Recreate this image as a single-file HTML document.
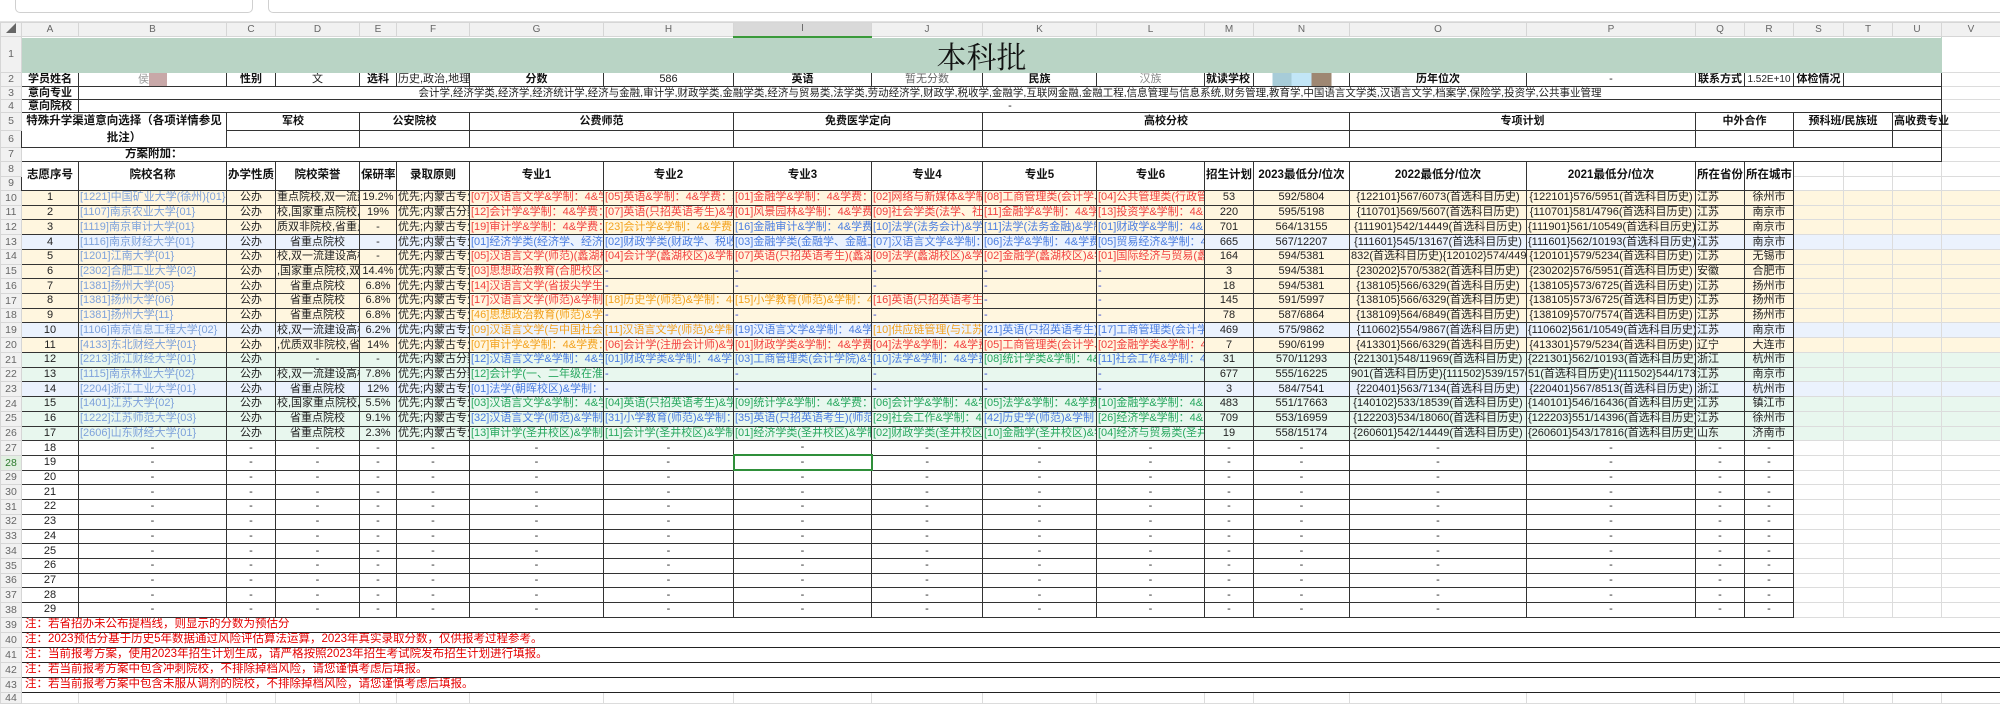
<!DOCTYPE html>
<html><head><meta charset="utf-8"><style>
*{margin:0;padding:0;box-sizing:border-box}
body{width:2000px;height:699px;overflow:hidden;background:#fff;font-family:"Liberation Sans","Noto Sans CJK SC",sans-serif;position:relative}
.top{position:absolute;left:0;top:0;width:2000px;height:22px;background:#fff;border-bottom:1px solid #e2e2e2}
.top .b1{position:absolute;left:15px;top:-6px;width:238px;height:19px;border:1px solid #d0d0d0;border-radius:5px}
.top .b2{position:absolute;left:268px;top:-6px;width:1740px;height:19px;border:1px solid #d0d0d0;border-radius:5px}
table{position:absolute;left:0;top:22px;border-collapse:collapse;table-layout:fixed;width:2000px}
td{overflow:hidden;white-space:nowrap;font-size:11px;line-height:1;text-align:center;border:1px solid #dcdcdc;padding:0 1px;color:#222}
td.rh{background:#f1f1f1;color:#666;font-size:10.5px;border-color:#d6d6d6}
tr.ch td{background:#f1f1f1;color:#666;font-size:10px;border-color:#d6d6d6}
tr.ch td.sel{background:#d9d9d9;border-bottom:2px solid #3a9a3a}
.t{background:#b9d4c5;font-family:"Noto Serif CJK SC",serif;font-size:30px;color:#111;border-color:#b9d4c5}
.bd{font-weight:bold;color:#111}
.k td.c{border:1px solid #333}
.l{text-align:left}
.y td.d{background:#fff6df}.b td.d{background:#ebf2fd}.g td.d{background:#e8f7ee}
td.d{border-color:#333}
td.e{border-color:#dcdcdc}
.y td.e{background:#fff6df}.b td.e{background:#ebf2fd}.g td.e{background:#e8f7ee}
.s{color:#7ea2db}
.r{color:#f2413f}.o{color:#f3a21e}.u{color:#4b7de0}.n{color:#27a85f}.m{color:#3246d0}
td.nt{color:#e60000;text-align:left;font-size:11.5px;border:none;border-bottom:1px solid #222;padding-left:3px}
</style></head><body>
<div class="top"><div class="b1"></div><div class="b2"></div></div>
<table>
<colgroup><col style="width:21px"><col style="width:57px"><col style="width:148px"><col style="width:49px"><col style="width:84px"><col style="width:37px"><col style="width:73px"><col style="width:134px"><col style="width:130px"><col style="width:138px"><col style="width:111px"><col style="width:114px"><col style="width:108px"><col style="width:49px"><col style="width:96px"><col style="width:177px"><col style="width:169px"><col style="width:49px"><col style="width:49px"><col style="width:50px"><col style="width:49px"><col style="width:49px"><col style="width:59px"></colgroup>
<tr class="ch" style="height:14px"><td>◢</td><td>A</td><td>B</td><td>C</td><td>D</td><td>E</td><td>F</td><td>G</td><td>H</td><td class="sel">I</td><td>J</td><td>K</td><td>L</td><td>M</td><td>N</td><td>O</td><td>P</td><td>Q</td><td>R</td><td>S</td><td>T</td><td>U</td><td>V</td></tr>
<tr style="height:36px"><td class="rh">1</td><td colspan="21" class="t">本科批</td><td class="e"></td></tr>
<tr class="k" style="height:14px"><td class="rh">2</td><td class="c bd">学员姓名</td><td class="c" style="color:#999">侯<span style="display:inline-block;width:18px;height:13px;background:#c8a8a8;vertical-align:middle"></span></td><td class="c bd">性别</td><td class="c">文</td><td class="c bd">选科</td><td class="c l">历史,政治,地理</td><td class="c bd">分数</td><td class="c">586</td><td class="c bd">英语</td><td class="c" style="color:#666">暂无分数</td><td class="c bd">民族</td><td class="c" style="color:#888">汉族</td><td class="c bd l" style="overflow:visible">就读学校</td><td class="c" style="background:linear-gradient(90deg,#fff 0 18px,#a7ccd8 18px 37px,#c2e6f7 37px 57px,#9e8772 57px 77px,#fff 77px)"></td><td class="c bd">历年位次</td><td class="c">-</td><td class="c bd">联系方式</td><td class="c" style="font-size:10px">1.52E+10</td><td class="c bd">体检情况</td><td class="c" colspan="2"></td><td class="e"></td></tr>
<tr class="k" style="height:13px"><td class="rh">3</td><td class="c bd">意向专业</td><td class="c" colspan="20" style="font-size:10.5px">会计学,经济学类,经济学,经济统计学,经济与金融,审计学,财政学类,金融学类,经济与贸易类,法学类,劳动经济学,财政学,税收学,金融学,互联网金融,金融工程,信息管理与信息系统,财务管理,教育学,中国语言文学类,汉语言文学,档案学,保险学,投资学,公共事业管理</td><td class="e"></td></tr>
<tr class="k" style="height:13px"><td class="rh">4</td><td class="c bd">意向院校</td><td class="c" colspan="20">-</td><td class="e"></td></tr>
<tr class="k" style="height:18px"><td class="rh">5</td><td class="c bd" colspan="2" rowspan="2" style="white-space:normal;line-height:17px;font-size:11.5px">特殊升学渠道意向选择（各项详情参见批注）</td><td class="c bd" colspan="2">军校</td><td class="c bd" colspan="2">公安院校</td><td class="c bd" colspan="2">公费师范</td><td class="c bd" colspan="2">免费医学定向</td><td class="c bd" colspan="4">高校分校</td><td class="c bd" colspan="2">专项计划</td><td class="c bd" colspan="2">中外合作</td><td class="c bd" colspan="2">预科班/民族班</td><td class="c bd" style="overflow:visible">高收费专业</td><td class="e"></td></tr>
<tr class="k" style="height:17px"><td class="rh">6</td><td class="c" colspan="2"></td><td class="c" colspan="2"></td><td class="c" colspan="2"></td><td class="c" colspan="2"></td><td class="c" colspan="4"></td><td class="c" colspan="2"></td><td class="c" colspan="2"></td><td class="c" colspan="2"></td><td class="c"></td><td class="e"></td></tr>
<tr class="k" style="height:14px"><td class="rh">7</td><td class="c bd" colspan="2" style="border-right:none;padding-left:60px;font-size:11.5px">方案附加：</td><td class="c" colspan="19" style="border-left:none"></td><td class="e"></td></tr>
<tr class="k" style="height:14.5px"><td class="rh">8</td><td class="c bd" rowspan="2" style="font-size:11.5px">志愿序号</td><td class="c bd" rowspan="2" style="font-size:11.5px">院校名称</td><td class="c bd" rowspan="2" style="font-size:11.5px">办学性质</td><td class="c bd" rowspan="2" style="font-size:11.5px">院校荣誉</td><td class="c bd" rowspan="2" style="font-size:11.5px">保研率</td><td class="c bd" rowspan="2" style="font-size:11.5px">录取原则</td><td class="c bd" rowspan="2" style="font-size:11.5px">专业1</td><td class="c bd" rowspan="2" style="font-size:11.5px">专业2</td><td class="c bd" rowspan="2" style="font-size:11.5px">专业3</td><td class="c bd" rowspan="2" style="font-size:11.5px">专业4</td><td class="c bd" rowspan="2" style="font-size:11.5px">专业5</td><td class="c bd" rowspan="2" style="font-size:11.5px">专业6</td><td class="c bd" rowspan="2" style="font-size:11.5px">招生计划</td><td class="c bd" rowspan="2" style="font-size:11.5px">2023最低分/位次</td><td class="c bd" rowspan="2" style="font-size:11.5px">2022最低分/位次</td><td class="c bd" rowspan="2" style="font-size:11.5px">2021最低分/位次</td><td class="c bd" rowspan="2" style="font-size:11.5px">所在省份</td><td class="c bd" rowspan="2" style="font-size:11.5px">所在城市</td><td class="e"></td><td class="e"></td><td class="e"></td><td class="e"></td></tr>
<tr style="height:14.5px"><td class="rh">9</td><td class="e"></td><td class="e"></td><td class="e"></td><td class="e"></td></tr>

<tr class="y" style="height:14.72px"><td class="rh">10</td><td class="d">1</td><td class="d l s">[1221]中国矿业大学(徐州){01}</td><td class="d">公办</td><td class="d">重点院校,双一流建</td><td class="d">19.2%</td><td class="d l">优先;内蒙古专业</td><td class="d l r">[07]汉语言文学&amp;学制：4&amp;学费</td><td class="d l r">[05]英语&amp;学制：4&amp;学费：5</td><td class="d l r">[01]金融学&amp;学制：4&amp;学费：</td><td class="d l r">[02]网络与新媒体&amp;学制</td><td class="d l r">[08]工商管理类(会计学、</td><td class="d l r">[04]公共管理类(行政管</td><td class="d">53</td><td class="d">592/5804</td><td class="d">{122101}567/6073(首选科目历史)</td><td class="d">{122101}576/5951(首选科目历史)</td><td class="d l">江苏</td><td class="d">徐州市</td><td class="e"></td><td class="e"></td><td class="e"></td><td class="e"></td></tr>
<tr class="y" style="height:14.72px"><td class="rh">11</td><td class="d">2</td><td class="d l s">[1107]南京农业大学{01}</td><td class="d">公办</td><td class="d">校,国家重点院校,双</td><td class="d">19%</td><td class="d l">优先;内蒙古分数</td><td class="d l r">[12]会计学&amp;学制：4&amp;学费：</td><td class="d l r">[07]英语(只招英语考生)&amp;学</td><td class="d l r">[01]风景园林&amp;学制：4&amp;学费</td><td class="d l r">[09]社会学类(法学、社</td><td class="d l r">[11]金融学&amp;学制：4&amp;学</td><td class="d l r">[13]投资学&amp;学制：4&amp;</td><td class="d">220</td><td class="d">595/5198</td><td class="d">{110701}569/5607(首选科目历史)</td><td class="d">{110701}581/4796(首选科目历史)</td><td class="d l">江苏</td><td class="d">南京市</td><td class="e"></td><td class="e"></td><td class="e"></td><td class="e"></td></tr>
<tr class="y" style="height:14.72px"><td class="rh">12</td><td class="d">3</td><td class="d l s">[1119]南京审计大学{01}</td><td class="d">公办</td><td class="d">质双非院校,省重点</td><td class="d">-</td><td class="d l">优先;内蒙古专业</td><td class="d l r">[19]审计学&amp;学制：4&amp;学费：</td><td class="d l o">[23]会计学&amp;学制：4&amp;学费：</td><td class="d l u">[16]金融审计&amp;学制：4&amp;学费</td><td class="d l u">[10]法学(法务会计)&amp;学</td><td class="d l u">[11]法学(法务金融)&amp;学制</td><td class="d l u">[01]财政学&amp;学制：4&amp;</td><td class="d">701</td><td class="d">564/13155</td><td class="d">{111901}542/14449(首选科目历史)</td><td class="d">{111901}561/10549(首选科目历史)</td><td class="d l">江苏</td><td class="d">南京市</td><td class="e"></td><td class="e"></td><td class="e"></td><td class="e"></td></tr>
<tr class="b" style="height:14.72px"><td class="rh">13</td><td class="d">4</td><td class="d l s">[1116]南京财经大学{01}</td><td class="d">公办</td><td class="d">省重点院校</td><td class="d">-</td><td class="d l">优先;内蒙古专业</td><td class="d l u">[01]经济学类(经济学、经济</td><td class="d l u">[02]财政学类(财政学、税收</td><td class="d l u">[03]金融学类(金融学、金融工</td><td class="d l u">[07]汉语言文学&amp;学制：</td><td class="d l u">[06]法学&amp;学制：4&amp;学费</td><td class="d l u">[05]贸易经济&amp;学制：4</td><td class="d">665</td><td class="d">567/12207</td><td class="d">{111601}545/13167(首选科目历史)</td><td class="d">{111601}562/10193(首选科目历史)</td><td class="d l">江苏</td><td class="d">南京市</td><td class="e"></td><td class="e"></td><td class="e"></td><td class="e"></td></tr>
<tr class="y" style="height:14.72px"><td class="rh">14</td><td class="d">5</td><td class="d l s">[1201]江南大学{01}</td><td class="d">公办</td><td class="d">校,双一流建设高校</td><td class="d">-</td><td class="d l">优先;内蒙古专业</td><td class="d l r">[05]汉语言文学(师范)(蠡湖校</td><td class="d l r">[04]会计学(蠡湖校区)&amp;学制</td><td class="d l r">[07]英语(只招英语考生)(蠡湖</td><td class="d l r">[09]法学(蠡湖校区)&amp;学</td><td class="d l r">[02]金融学(蠡湖校区)&amp;学</td><td class="d l r">[01]国际经济与贸易(蠡</td><td class="d">164</td><td class="d">594/5381</td><td class="d" style="text-align:right">832(首选科目历史){120102}574/4499</td><td class="d">{120101}579/5234(首选科目历史)</td><td class="d l">江苏</td><td class="d">无锡市</td><td class="e"></td><td class="e"></td><td class="e"></td><td class="e"></td></tr>
<tr class="y" style="height:14.72px"><td class="rh">15</td><td class="d">6</td><td class="d l s">[2302]合肥工业大学{02}</td><td class="d">公办</td><td class="d">,国家重点院校,双</td><td class="d">14.4%</td><td class="d l">优先;内蒙古专业</td><td class="d l r">[03]思想政治教育(合肥校区)</td><td class="d l m">-</td><td class="d l m">-</td><td class="d l m">-</td><td class="d l m">-</td><td class="d l m">-</td><td class="d">3</td><td class="d">594/5381</td><td class="d">{230202}570/5382(首选科目历史)</td><td class="d">{230202}576/5951(首选科目历史)</td><td class="d l">安徽</td><td class="d">合肥市</td><td class="e"></td><td class="e"></td><td class="e"></td><td class="e"></td></tr>
<tr class="y" style="height:14.72px"><td class="rh">16</td><td class="d">7</td><td class="d l s">[1381]扬州大学{05}</td><td class="d">公办</td><td class="d">省重点院校</td><td class="d">6.8%</td><td class="d l">优先;内蒙古专业</td><td class="d l r">[14]汉语言文学(省拔尖学生)</td><td class="d l m">-</td><td class="d l m">-</td><td class="d l m">-</td><td class="d l m">-</td><td class="d l m">-</td><td class="d">18</td><td class="d">594/5381</td><td class="d">{138105}566/6329(首选科目历史)</td><td class="d">{138105}573/6725(首选科目历史)</td><td class="d l">江苏</td><td class="d">扬州市</td><td class="e"></td><td class="e"></td><td class="e"></td><td class="e"></td></tr>
<tr class="y" style="height:14.72px"><td class="rh">17</td><td class="d">8</td><td class="d l s">[1381]扬州大学{06}</td><td class="d">公办</td><td class="d">省重点院校</td><td class="d">6.8%</td><td class="d l">优先;内蒙古专业</td><td class="d l r">[17]汉语言文学(师范)&amp;学制：</td><td class="d l o">[18]历史学(师范)&amp;学制：48</td><td class="d l o">[15]小学教育(师范)&amp;学制：4</td><td class="d l r">[16]英语(只招英语考生</td><td class="d l m">-</td><td class="d l m">-</td><td class="d">145</td><td class="d">591/5997</td><td class="d">{138105}566/6329(首选科目历史)</td><td class="d">{138105}573/6725(首选科目历史)</td><td class="d l">江苏</td><td class="d">扬州市</td><td class="e"></td><td class="e"></td><td class="e"></td><td class="e"></td></tr>
<tr class="y" style="height:14.72px"><td class="rh">18</td><td class="d">9</td><td class="d l s">[1381]扬州大学{11}</td><td class="d">公办</td><td class="d">省重点院校</td><td class="d">6.8%</td><td class="d l">优先;内蒙古专业</td><td class="d l o">[46]思想政治教育(师范)&amp;学</td><td class="d l m">-</td><td class="d l m">-</td><td class="d l m">-</td><td class="d l m">-</td><td class="d l m">-</td><td class="d">78</td><td class="d">587/6864</td><td class="d">{138109}564/6849(首选科目历史)</td><td class="d">{138109}570/7574(首选科目历史)</td><td class="d l">江苏</td><td class="d">扬州市</td><td class="e"></td><td class="e"></td><td class="e"></td><td class="e"></td></tr>
<tr class="b" style="height:14.72px"><td class="rh">19</td><td class="d">10</td><td class="d l s">[1106]南京信息工程大学{02}</td><td class="d">公办</td><td class="d">校,双一流建设高校</td><td class="d">6.2%</td><td class="d l">优先;内蒙古专业</td><td class="d l o">[09]汉语言文学(与中国社会</td><td class="d l o">[11]汉语言文学(师范)&amp;学制</td><td class="d l u">[19]汉语言文学&amp;学制：4&amp;学</td><td class="d l o">[10]供应链管理(与江苏</td><td class="d l u">[21]英语(只招英语考生)&amp;</td><td class="d l u">[17]工商管理类(会计学</td><td class="d">469</td><td class="d">575/9862</td><td class="d">{110602}554/9867(首选科目历史)</td><td class="d">{110602}561/10549(首选科目历史)</td><td class="d l">江苏</td><td class="d">南京市</td><td class="e"></td><td class="e"></td><td class="e"></td><td class="e"></td></tr>
<tr class="y" style="height:14.72px"><td class="rh">20</td><td class="d">11</td><td class="d l s">[4133]东北财经大学{01}</td><td class="d">公办</td><td class="d">,优质双非院校,省</td><td class="d">14%</td><td class="d l">优先;内蒙古专业</td><td class="d l o">[07]审计学&amp;学制：4&amp;学费：</td><td class="d l r">[06]会计学(注册会计师)&amp;学</td><td class="d l r">[01]财政学类&amp;学制：4&amp;学费</td><td class="d l r">[04]法学&amp;学制：4&amp;学费</td><td class="d l r">[05]工商管理类(会计学、</td><td class="d l r">[02]金融学类&amp;学制：4</td><td class="d">7</td><td class="d">590/6199</td><td class="d">{413301}566/6329(首选科目历史)</td><td class="d">{413301}579/5234(首选科目历史)</td><td class="d l">辽宁</td><td class="d">大连市</td><td class="e"></td><td class="e"></td><td class="e"></td><td class="e"></td></tr>
<tr class="g" style="height:14.72px"><td class="rh">21</td><td class="d">12</td><td class="d l s">[2213]浙江财经大学{01}</td><td class="d">公办</td><td class="d">-</td><td class="d">-</td><td class="d l">优先;内蒙古分数</td><td class="d l u">[12]汉语言文学&amp;学制：4&amp;学</td><td class="d l u">[01]财政学类&amp;学制：4&amp;学费</td><td class="d l u">[03]工商管理类(会计学院)&amp;学</td><td class="d l u">[10]法学&amp;学制：4&amp;学费</td><td class="d l n">[08]统计学类&amp;学制：4&amp;</td><td class="d l u">[11]社会工作&amp;学制：4</td><td class="d">31</td><td class="d">570/11293</td><td class="d">{221301}548/11969(首选科目历史)</td><td class="d">{221301}562/10193(首选科目历史)</td><td class="d l">浙江</td><td class="d">杭州市</td><td class="e"></td><td class="e"></td><td class="e"></td><td class="e"></td></tr>
<tr class="g" style="height:14.72px"><td class="rh">22</td><td class="d">13</td><td class="d l s">[1115]南京林业大学{02}</td><td class="d">公办</td><td class="d">校,双一流建设高校</td><td class="d">7.8%</td><td class="d l">优先;内蒙古分数</td><td class="d l n">[12]会计学(一、二年级在淮</td><td class="d l m">-</td><td class="d l m">-</td><td class="d l m">-</td><td class="d l m">-</td><td class="d l m">-</td><td class="d">677</td><td class="d">555/16225</td><td class="d" style="text-align:right">901(首选科目历史){111502}539/15762</td><td class="d" style="text-align:right">51(首选科目历史){111502}544/1732</td><td class="d l">江苏</td><td class="d">南京市</td><td class="e"></td><td class="e"></td><td class="e"></td><td class="e"></td></tr>
<tr class="b" style="height:14.72px"><td class="rh">23</td><td class="d">14</td><td class="d l s">[2204]浙江工业大学{01}</td><td class="d">公办</td><td class="d">省重点院校</td><td class="d">12%</td><td class="d l">优先;内蒙古专业</td><td class="d l u">[01]法学(朝晖校区)&amp;学制：4</td><td class="d l m">-</td><td class="d l m">-</td><td class="d l m">-</td><td class="d l m">-</td><td class="d l m">-</td><td class="d">3</td><td class="d">584/7541</td><td class="d">{220401}563/7134(首选科目历史)</td><td class="d">{220401}567/8513(首选科目历史)</td><td class="d l">浙江</td><td class="d">杭州市</td><td class="e"></td><td class="e"></td><td class="e"></td><td class="e"></td></tr>
<tr class="g" style="height:14.72px"><td class="rh">24</td><td class="d">15</td><td class="d l s">[1401]江苏大学{02}</td><td class="d">公办</td><td class="d">校,国家重点院校,</td><td class="d">5.5%</td><td class="d l">优先;内蒙古专业</td><td class="d l n">[03]汉语言文学&amp;学制：4&amp;学</td><td class="d l n">[04]英语(只招英语考生)&amp;学</td><td class="d l n">[09]统计学&amp;学制：4&amp;学费：</td><td class="d l n">[06]会计学&amp;学制：4&amp;学</td><td class="d l n">[05]法学&amp;学制：4&amp;学费</td><td class="d l n">[10]金融学&amp;学制：4&amp;</td><td class="d">483</td><td class="d">551/17663</td><td class="d">{140102}533/18539(首选科目历史)</td><td class="d">{140101}546/16436(首选科目历史)</td><td class="d l">江苏</td><td class="d">镇江市</td><td class="e"></td><td class="e"></td><td class="e"></td><td class="e"></td></tr>
<tr class="g" style="height:14.72px"><td class="rh">25</td><td class="d">16</td><td class="d l s">[1222]江苏师范大学{03}</td><td class="d">公办</td><td class="d">省重点院校</td><td class="d">9.1%</td><td class="d l">优先;内蒙古专业</td><td class="d l u">[32]汉语言文学(师范)&amp;学制</td><td class="d l u">[31]小学教育(师范)&amp;学制：</td><td class="d l u">[35]英语(只招英语考生)(师范</td><td class="d l n">[29]社会工作&amp;学制：4</td><td class="d l u">[42]历史学(师范)&amp;学制：</td><td class="d l n">[26]经济学&amp;学制：4&amp;</td><td class="d">709</td><td class="d">553/16959</td><td class="d">{122203}534/18060(首选科目历史)</td><td class="d">{122203}551/14396(首选科目历史)</td><td class="d l">江苏</td><td class="d">徐州市</td><td class="e"></td><td class="e"></td><td class="e"></td><td class="e"></td></tr>
<tr class="g" style="height:14.72px"><td class="rh">26</td><td class="d">17</td><td class="d l s">[2606]山东财经大学{01}</td><td class="d">公办</td><td class="d">省重点院校</td><td class="d">2.3%</td><td class="d l">优先;内蒙古专业</td><td class="d l n">[13]审计学(圣井校区)&amp;学制</td><td class="d l n">[11]会计学(圣井校区)&amp;学制</td><td class="d l n">[01]经济学类(圣井校区)&amp;学制</td><td class="d l n">[02]财政学类(圣井校区</td><td class="d l n">[10]金融学(圣井校区)&amp;学</td><td class="d l n">[04]经济与贸易类(圣井</td><td class="d">19</td><td class="d">558/15174</td><td class="d">{260601}542/14449(首选科目历史)</td><td class="d">{260601}543/17816(首选科目历史)</td><td class="d l">山东</td><td class="d">济南市</td><td class="e"></td><td class="e"></td><td class="e"></td><td class="e"></td></tr>

<tr style="height:14.72px"><td class="rh">27</td><td class="d">18</td><td class="d">-</td><td class="d">-</td><td class="d">-</td><td class="d">-</td><td class="d">-</td><td class="d">-</td><td class="d">-</td><td class="d">-</td><td class="d">-</td><td class="d">-</td><td class="d">-</td><td class="d">-</td><td class="d">-</td><td class="d">-</td><td class="d">-</td><td class="d">-</td><td class="d">-</td><td class="e"></td><td class="e"></td><td class="e"></td><td class="e"></td></tr>
<tr style="height:14.72px"><td class="rh" style="background:#e2efe2;color:#2a7a2a">28</td><td class="d">19</td><td class="d">-</td><td class="d">-</td><td class="d">-</td><td class="d">-</td><td class="d">-</td><td class="d">-</td><td class="d">-</td><td class="d" style="border:2px solid #2f8f3a">-</td><td class="d">-</td><td class="d">-</td><td class="d">-</td><td class="d">-</td><td class="d">-</td><td class="d">-</td><td class="d">-</td><td class="d">-</td><td class="d">-</td><td class="e"></td><td class="e"></td><td class="e"></td><td class="e"></td></tr>
<tr style="height:14.72px"><td class="rh">29</td><td class="d">20</td><td class="d">-</td><td class="d">-</td><td class="d">-</td><td class="d">-</td><td class="d">-</td><td class="d">-</td><td class="d">-</td><td class="d">-</td><td class="d">-</td><td class="d">-</td><td class="d">-</td><td class="d">-</td><td class="d">-</td><td class="d">-</td><td class="d">-</td><td class="d">-</td><td class="d">-</td><td class="e"></td><td class="e"></td><td class="e"></td><td class="e"></td></tr>
<tr style="height:14.72px"><td class="rh">30</td><td class="d">21</td><td class="d">-</td><td class="d">-</td><td class="d">-</td><td class="d">-</td><td class="d">-</td><td class="d">-</td><td class="d">-</td><td class="d">-</td><td class="d">-</td><td class="d">-</td><td class="d">-</td><td class="d">-</td><td class="d">-</td><td class="d">-</td><td class="d">-</td><td class="d">-</td><td class="d">-</td><td class="e"></td><td class="e"></td><td class="e"></td><td class="e"></td></tr>
<tr style="height:14.72px"><td class="rh">31</td><td class="d">22</td><td class="d">-</td><td class="d">-</td><td class="d">-</td><td class="d">-</td><td class="d">-</td><td class="d">-</td><td class="d">-</td><td class="d">-</td><td class="d">-</td><td class="d">-</td><td class="d">-</td><td class="d">-</td><td class="d">-</td><td class="d">-</td><td class="d">-</td><td class="d">-</td><td class="d">-</td><td class="e"></td><td class="e"></td><td class="e"></td><td class="e"></td></tr>
<tr style="height:14.72px"><td class="rh">32</td><td class="d">23</td><td class="d">-</td><td class="d">-</td><td class="d">-</td><td class="d">-</td><td class="d">-</td><td class="d">-</td><td class="d">-</td><td class="d">-</td><td class="d">-</td><td class="d">-</td><td class="d">-</td><td class="d">-</td><td class="d">-</td><td class="d">-</td><td class="d">-</td><td class="d">-</td><td class="d">-</td><td class="e"></td><td class="e"></td><td class="e"></td><td class="e"></td></tr>
<tr style="height:14.72px"><td class="rh">33</td><td class="d">24</td><td class="d">-</td><td class="d">-</td><td class="d">-</td><td class="d">-</td><td class="d">-</td><td class="d">-</td><td class="d">-</td><td class="d">-</td><td class="d">-</td><td class="d">-</td><td class="d">-</td><td class="d">-</td><td class="d">-</td><td class="d">-</td><td class="d">-</td><td class="d">-</td><td class="d">-</td><td class="e"></td><td class="e"></td><td class="e"></td><td class="e"></td></tr>
<tr style="height:14.72px"><td class="rh">34</td><td class="d">25</td><td class="d">-</td><td class="d">-</td><td class="d">-</td><td class="d">-</td><td class="d">-</td><td class="d">-</td><td class="d">-</td><td class="d">-</td><td class="d">-</td><td class="d">-</td><td class="d">-</td><td class="d">-</td><td class="d">-</td><td class="d">-</td><td class="d">-</td><td class="d">-</td><td class="d">-</td><td class="e"></td><td class="e"></td><td class="e"></td><td class="e"></td></tr>
<tr style="height:14.72px"><td class="rh">35</td><td class="d">26</td><td class="d">-</td><td class="d">-</td><td class="d">-</td><td class="d">-</td><td class="d">-</td><td class="d">-</td><td class="d">-</td><td class="d">-</td><td class="d">-</td><td class="d">-</td><td class="d">-</td><td class="d">-</td><td class="d">-</td><td class="d">-</td><td class="d">-</td><td class="d">-</td><td class="d">-</td><td class="e"></td><td class="e"></td><td class="e"></td><td class="e"></td></tr>
<tr style="height:14.72px"><td class="rh">36</td><td class="d">27</td><td class="d">-</td><td class="d">-</td><td class="d">-</td><td class="d">-</td><td class="d">-</td><td class="d">-</td><td class="d">-</td><td class="d">-</td><td class="d">-</td><td class="d">-</td><td class="d">-</td><td class="d">-</td><td class="d">-</td><td class="d">-</td><td class="d">-</td><td class="d">-</td><td class="d">-</td><td class="e"></td><td class="e"></td><td class="e"></td><td class="e"></td></tr>
<tr style="height:14.72px"><td class="rh">37</td><td class="d">28</td><td class="d">-</td><td class="d">-</td><td class="d">-</td><td class="d">-</td><td class="d">-</td><td class="d">-</td><td class="d">-</td><td class="d">-</td><td class="d">-</td><td class="d">-</td><td class="d">-</td><td class="d">-</td><td class="d">-</td><td class="d">-</td><td class="d">-</td><td class="d">-</td><td class="d">-</td><td class="e"></td><td class="e"></td><td class="e"></td><td class="e"></td></tr>
<tr style="height:14.72px"><td class="rh">38</td><td class="d">29</td><td class="d">-</td><td class="d">-</td><td class="d">-</td><td class="d">-</td><td class="d">-</td><td class="d">-</td><td class="d">-</td><td class="d">-</td><td class="d">-</td><td class="d">-</td><td class="d">-</td><td class="d">-</td><td class="d">-</td><td class="d">-</td><td class="d">-</td><td class="d">-</td><td class="d">-</td><td class="e"></td><td class="e"></td><td class="e"></td><td class="e"></td></tr>

<tr style="height:15px"><td class="rh">39</td><td class="nt" colspan="22">注：若省招办未公布提档线，则显示的分数为预估分</td></tr>
<tr style="height:15px"><td class="rh">40</td><td class="nt" colspan="22">注：2023预估分基于历史5年数据通过风险评估算法运算，2023年真实录取分数，仅供报考过程参考。</td></tr>
<tr style="height:15px"><td class="rh">41</td><td class="nt" colspan="22">注：当前报考方案，使用2023年招生计划生成，请严格按照2023年招生考试院发布招生计划进行填报。</td></tr>
<tr style="height:15px"><td class="rh">42</td><td class="nt" colspan="22">注：若当前报考方案中包含冲刺院校，不排除掉档风险，请您谨慎考虑后填报。</td></tr>
<tr style="height:15px"><td class="rh">43</td><td class="nt" colspan="22">注：若当前报考方案中包含未服从调剂的院校，不排除掉档风险，请您谨慎考虑后填报。</td></tr>
<tr style="height:10px"><td class="rh">44</td><td class="e"></td><td class="e"></td><td class="e"></td><td class="e"></td><td class="e"></td><td class="e"></td><td class="e"></td><td class="e"></td><td class="e"></td><td class="e"></td><td class="e"></td><td class="e"></td><td class="e"></td><td class="e"></td><td class="e"></td><td class="e"></td><td class="e"></td><td class="e"></td><td class="e"></td><td class="e"></td><td class="e"></td><td class="e"></td></tr>
</table>
</body></html>
